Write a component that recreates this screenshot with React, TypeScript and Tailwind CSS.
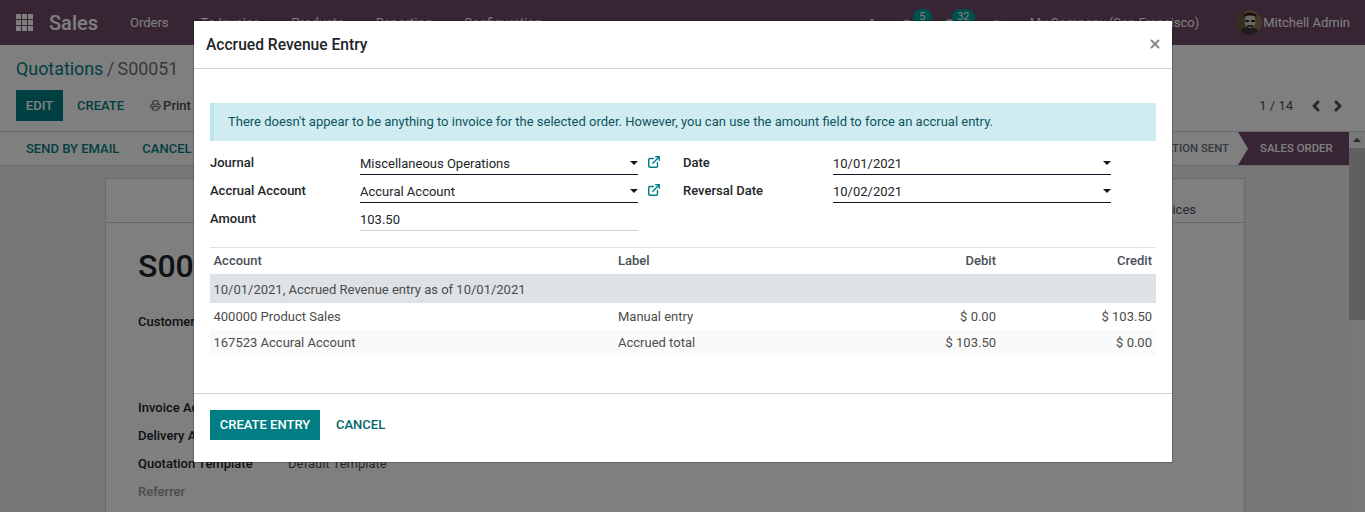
import { ChevronLeft, ChevronRight, Clock, ExternalLink, MessageCircle, Printer, Scissors, X } from "lucide-react";

function Caret() {
  return <span className="ml-auto -mt-[1px] w-0 h-0 border-x-[4px] border-x-transparent border-t-[4px] border-t-[#111827]" />;
}

function Field({ value, caret = true, muted = false }: { value: string; caret?: boolean; muted?: boolean }) {
  return (
    <div className={`w-[278px] h-[28px] flex items-center pt-[6px] border-b ${muted ? "border-[#ced4da]" : "border-[#111827]"} text-[13px] text-[#212529]`}>
      <span>{value}</span>
      {caret && <Caret />}
    </div>
  );
}

function Label({ children }: { children: string }) {
  return <span className="w-[150px] mt-[3px] text-[13px] font-medium text-[#212529]">{children}</span>;
}

function Row({ a, b, c, d, cls }: { a: string; b: string; c: string; d: string; cls: string }) {
  return (
    <div className={`flex items-center pl-[3.5px] pr-[4px] text-[13px] text-[#4c4c4c] ${cls}`}>
      <span className="w-[404.5px]">{a}</span>
      <span className="w-[200px]">{b}</span>
      <span className="w-[178px] text-right">{c}</span>
      <span className="flex-1 text-right">{d}</span>
    </div>
  );
}

export default function App() {
  return (
    <div className="relative h-[512px] w-[1365px] overflow-hidden bg-[#edeeef] font-['Roboto',sans-serif]">
      {/* Page behind the dialog */}
      <header className="h-[45px] bg-[#714b67] flex items-center text-white text-[13px]">
        <span className="ml-[16px] grid grid-cols-3 gap-[1.5px] w-[17px]">
          {Array.from({ length: 9 }).map((_, i) => (
            <span key={i} className="h-[4.5px] bg-white" />
          ))}
        </span>
        <span className="ml-[16px] text-[20px] font-medium">Sales</span>
        <span className="ml-[32px]">Orders</span>
        <span className="ml-[32px]">To Invoice</span>
        <span className="ml-[32px]">Products</span>
        <span className="ml-[32px]">Reporting</span>
        <span className="ml-[32px]">Configuration</span>
        <span className="ml-auto w-[4px] h-[10px] mt-[2px] rounded-full bg-white" />
        <span className="relative ml-[25px] mt-[8px]">
          <MessageCircle size={16} fill="currentColor" />
          <span className="absolute -top-[10px] left-[14px] w-[19px] h-[16px] bg-[#00a09d] rounded-full text-center text-[11px] leading-[15px]">5</span>
        </span>
        <span className="relative ml-[27px] mt-[8px]">
          <Clock size={16} strokeWidth={3} />
          <span className="absolute -top-[10px] left-[10px] w-[23px] h-[16px] bg-[#00a09d] rounded-full text-center text-[11px] leading-[15px]">32</span>
        </span>
        <Scissors size={14} strokeWidth={2.5} className="ml-[35px] mt-[6px]" />
        <span className="ml-[23px] mr-[38px]">My Company (San Francisco)</span>
        <svg width="25" height="25" viewBox="0 0 25 25" className="mr-[1px]">
          <clipPath id="av">
            <circle cx="12.5" cy="12.5" r="12.5" />
          </clipPath>
          <g clipPath="url(#av)">
            <rect width="25" height="25" fill="#8c7350" />
            <rect x="0" y="0" width="8" height="25" fill="#6b5a3c" />
            <path d="M2 25c1-6 5-8 10-8s10 2 11 8z" fill="#3c3a38" />
            <ellipse cx="13" cy="11" rx="5.5" ry="7" fill="#d8cfc4" />
            <path d="M6 7c2-5 12-6 14 0-3-2-11-2-14 0z" fill="#1f1c1a" />
            <path d="M8 10h4v2H8zM14 10h4v2h-4z" fill="#2b2825" />
            <path d="M10 15h6v2h-6z" fill="#4e4338" />
          </g>
        </svg>
        <span className="mr-[15px]">Mitchell Admin</span>
      </header>

      <section className="h-[121px] bg-white flex flex-col">
        <div className="h-[87px] border-b border-[#ced4da] px-[16px] pt-[12px]">
          <div className="text-[17.875px] leading-[24px] text-[#6c757d]">
            <span className="text-[#017e84]">Quotations</span> <span className="-ml-[1px]">/</span> <span className="-ml-[1px]">S00051</span>
          </div>
          <div className="mt-[9px] flex items-center text-[13px] font-medium">
            <span className="w-[47px] h-[31px] bg-[#017e84] text-white flex items-center justify-center">EDIT</span>
            <span className="ml-[14px] text-[#017e84]">CREATE</span>
            <span className="ml-[26px] flex items-center gap-[2px] text-[#495057]">
              <Printer size={11} />
              Print
            </span>
            <span className="ml-auto mr-[3px] flex items-center text-[#495057] font-normal text-[13px]">
              1 / 14
              <ChevronLeft size={16} strokeWidth={4.5} className="ml-[15px]" />
              <ChevronRight size={16} strokeWidth={4.5} className="ml-[6px]" />
            </span>
          </div>
        </div>
        <div className="h-[34px] border-b border-[#ced4da] flex items-center pl-[26px] pr-[16px] text-[13px] font-medium text-[#017e84]">
          <span>SEND BY EMAIL</span>
          <span className="ml-[23px]">CANCEL</span>
          <span className="ml-auto mr-[9px] pt-[1px] text-[#6c757d] text-[11.375px]">QUOTATION SENT</span>
          <span className="h-[33px] w-[111px] bg-[#714b67] text-white text-[11.375px] pt-[1px] flex items-center pl-[22px] [clip-path:polygon(0_0,100%_0,100%_100%,0_100%,10px_50%)]">
            SALES ORDER
          </span>
        </div>
      </section>

      <main className="ml-[105px] mt-[12px] w-[1140px] h-[340px] bg-white border border-[#ced4da]">
        <div className="h-[44px] border-b border-[#ced4da] flex items-end justify-end pr-[48px] pb-[3px] text-[13px] text-[#495057]">
          Invoices
        </div>
        <div className="pl-[32px] pt-[24px]">
          <div className="text-[32px] leading-[38px] font-medium text-[#212529]">S00051</div>
          <div className="mt-[27px] text-[13px] font-medium text-[#212529]">Customer</div>
          <div className="mt-[68px] flex flex-col gap-[13px] text-[13px] leading-[15px] font-medium text-[#212529]">
            <span>Invoice Address</span>
            <span>Delivery Address</span>
            <span className="flex">
              <span className="w-[150px]">Quotation Template</span>
              <span className="font-normal text-[#495057]">Default Template</span>
            </span>
            <span className="text-[#9a9a9a]">Referrer</span>
          </div>
        </div>
      </main>

      <div className="absolute right-0 top-[132px] bottom-0 w-[16px] bg-[#f1f1f1]">
        <div className="h-[16px] flex items-center justify-center">
          <span className="w-0 h-0 border-x-[4px] border-x-transparent border-b-[4px] border-b-[#505050]" />
        </div>
        <div className="h-[172px] bg-[#c1c1c1]" />
      </div>

      {/* Backdrop */}
      <div className="absolute inset-0 bg-black/50" />

      {/* Dialog */}
      <div className="absolute left-[194px] top-[21px] w-[978px] h-[441px] bg-white flex flex-col shadow-[0_0_0_1px_rgba(0,0,0,0.2)]">
        <div className="h-[48px] border-b border-[#ced4da] flex items-center justify-between pl-[12px] pr-[10px]">
          <h4 className="pt-[2px] text-[15.6px] font-medium text-[#212529]">Accrued Revenue Entry</h4>
          <X size={14} strokeWidth={3.5} className="-mt-[2px] text-[#8a8a8a]" />
        </div>

        <div className="flex-1 px-[16px] pt-[34px]">
          <div className="h-[38px] bg-[#d1ecf1] border-l-[4px] border-[#bee5eb] flex items-center pl-[14px] text-[13px] text-[#0c5460]">
            There doesn't appear to be anything to invoice for the selected order. However, you can use the amount field to force an accrual entry.
          </div>

          <div className="flex mt-[6px]">
            <div className="flex flex-col w-[473px]">
              {[
                ["Journal", "Miscellaneous Operations"],
                ["Accrual Account", "Accural Account"],
              ].map(([l, v]) => (
                <div key={l} className="flex items-center h-[28px]">
                  <Label>{l}</Label>
                  <Field value={v} />
                  <ExternalLink size={14} strokeWidth={2.5} className="ml-[9px] mt-[2px] text-[#017e84]" />
                </div>
              ))}
              <div className="flex items-center h-[28px]">
                <Label>Amount</Label>
                <Field value="103.50" caret={false} muted />
              </div>
            </div>
            <div className="flex flex-col">
              {[
                ["Date", "10/01/2021"],
                ["Reversal Date", "10/02/2021"],
              ].map(([l, v]) => (
                <div key={l} className="flex items-center h-[28px]">
                  <Label>{l}</Label>
                  <Field value={v} />
                </div>
              ))}
            </div>
          </div>

          <div className="mt-[16px] border-t border-[#dee2e6]">
            <div className="h-[26px] flex items-center pl-[3.5px] pr-[4px] text-[13px] font-medium text-[#495057]">
              <span className="w-[404.5px]">Account</span>
              <span className="w-[200px]">Label</span>
              <span className="w-[178px] text-right">Debit</span>
              <span className="flex-1 text-right">Credit</span>
            </div>
            <div className="h-[29px] pt-[2px] bg-[#dee2e6] flex items-center pl-[3.5px] text-[13px] text-[#4c4c4c]">
              10/01/2021, Accrued Revenue entry as of 10/01/2021
            </div>
            <Row cls="h-[27px]" a="400000 Product Sales" b="Manual entry" c="$ 0.00" d="$ 103.50" />
            <Row cls="h-[25px] bg-[#fafafa]" a="167523 Accural Account" b="Accrued total" c="$ 103.50" d="$ 0.00" />
          </div>
        </div>

        <div className="h-[69px] border-t border-[#ced4da] flex items-start pt-[16px] pl-[16px] text-[13px] font-medium">
          <span className="w-[110px] h-[30px] bg-[#017e84] text-white flex items-center justify-center">CREATE ENTRY</span>
          <span className="ml-[16px] mt-[5px] leading-[20px] text-[#01666b]">CANCEL</span>
        </div>
      </div>
    </div>
  );
}
